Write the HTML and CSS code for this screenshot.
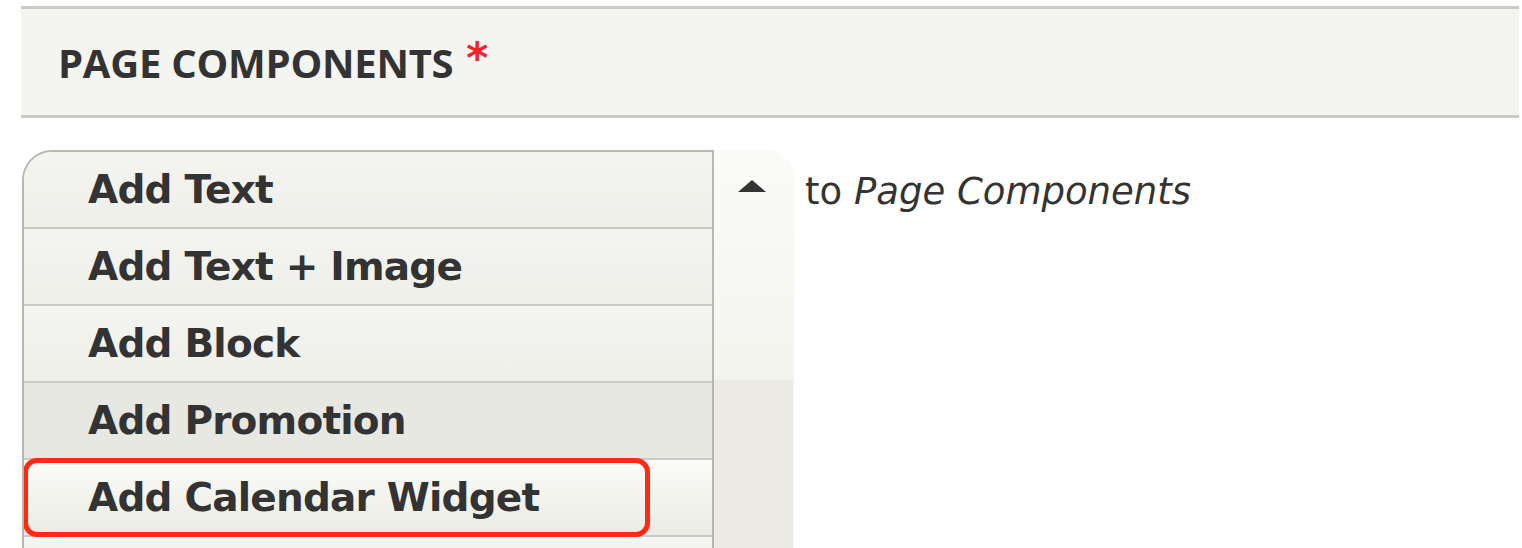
FILE: index.html
```html
<!DOCTYPE html>
<html lang="en">
<head>
<meta charset="utf-8">
<title>Page Components</title>
<link rel="stylesheet" href="styles.css">
</head>
<body>
<div class="page">
  <div class="legend">
    <span class="legend-title">PAGE COMPONENTS</span><span class="required">*</span>
  </div>
  <div class="add-row">
    <div class="dropbutton">
      <ul class="actions">
        <li class="action">Add Text</li>
        <li class="action">Add Text + Image</li>
        <li class="action">Add Block</li>
        <li class="action action-hover">Add Promotion</li>
        <li class="action action-focus">Add Calendar Widget<span class="highlight"></span></li>
        <li class="action action-empty"></li>
      </ul>
      <div class="toggle-col">
        <div class="toggle"><span class="arrow"></span></div>
        <div class="toggle-rest"></div>
      </div>
    </div>
    <div class="target">to <em>Page Components</em></div>
  </div>
</div>
</body>
</html>
```
FILE: styles.css
```css
html, body {
  margin: 0;
  padding: 0;
  background: #ffffff;
  overflow: hidden;
}

.page {
  padding: 6px 3px 0 21px;
  color: #333333;
}

.legend {
  display: flex;
  align-items: center;
  height: 106px;
  padding-left: 37px;
  background: #f4f4f0;
  border-top: 3px solid #c9cac4;
  border-bottom: 3px solid #c9cac4;
}

.legend-title {
  font-family: "Open Sans", "DejaVu Sans", sans-serif;
  font-weight: 700;
  font-size: 40px;
  letter-spacing: -0.25px;
  color: #333333;
  margin-top: 1px;
}

.required {
  font-family: "DejaVu Sans", sans-serif;
  font-weight: 700;
  font-size: 42px;
  line-height: 42px;
  color: #f0222a;
  margin-left: 13px;
  align-self: flex-start;
  margin-top: 29px;
}

.add-row {
  display: flex;
  align-items: flex-start;
  margin-top: 32px;
  margin-left: 1px;
}

.dropbutton {
  display: flex;
  height: 420px;
}

.actions {
  list-style: none;
  margin: 0;
  padding: 0;
  width: 692px;
  box-sizing: border-box;
  border: 2px solid #b7b8b1;
  border-bottom: none;
  border-top-left-radius: 30px;
  overflow: hidden;
  background: #efefea;
}

.action {
  position: relative;
  height: 75px;
  line-height: 75px;
  padding-left: 64px;
  border-bottom: 2px solid #c9cac3;
  background: linear-gradient(#f4f4f0, #efefea);
  font-family: "DejaVu Sans", sans-serif;
  font-weight: 700;
  font-size: 39px;
  letter-spacing: -0.8px;
  color: #333333;
  white-space: nowrap;
}

.action-hover {
  background: #e8e8e2;
}

.action-focus {
  background: linear-gradient(#fbfbf8, #ebebe4);
}

.highlight {
  position: absolute;
  left: -1px;
  top: -2px;
  width: 627px;
  height: 79px;
  box-sizing: border-box;
  border: 5px solid #ff2a12;
  border-radius: 14px;
}

.toggle-col {
  display: flex;
  flex-direction: column;
  width: 79px;
  border-top-right-radius: 30px;
  overflow: hidden;
  box-shadow: 1px 0 2px rgba(0, 0, 0, 0.04);
}

.toggle {
  height: 200px;
  padding: 30px 0 0 24px;
  background: linear-gradient(#fafaf7, #f4f4ef);
}

.arrow {
  display: block;
  width: 0;
  height: 0;
  border-left: 14px solid transparent;
  border-right: 14px solid transparent;
  border-bottom: 12px solid #333333;
}

.toggle-rest {
  flex: 1;
  background: #ebebe3;
}

.target {
  margin-left: 12px;
  padding-top: 20px;
  font-family: "DejaVu Sans", sans-serif;
  font-size: 37px;
  line-height: 44px;
  color: #333333;
  white-space: nowrap;
}

.target em {
  font-style: italic;
}
```
